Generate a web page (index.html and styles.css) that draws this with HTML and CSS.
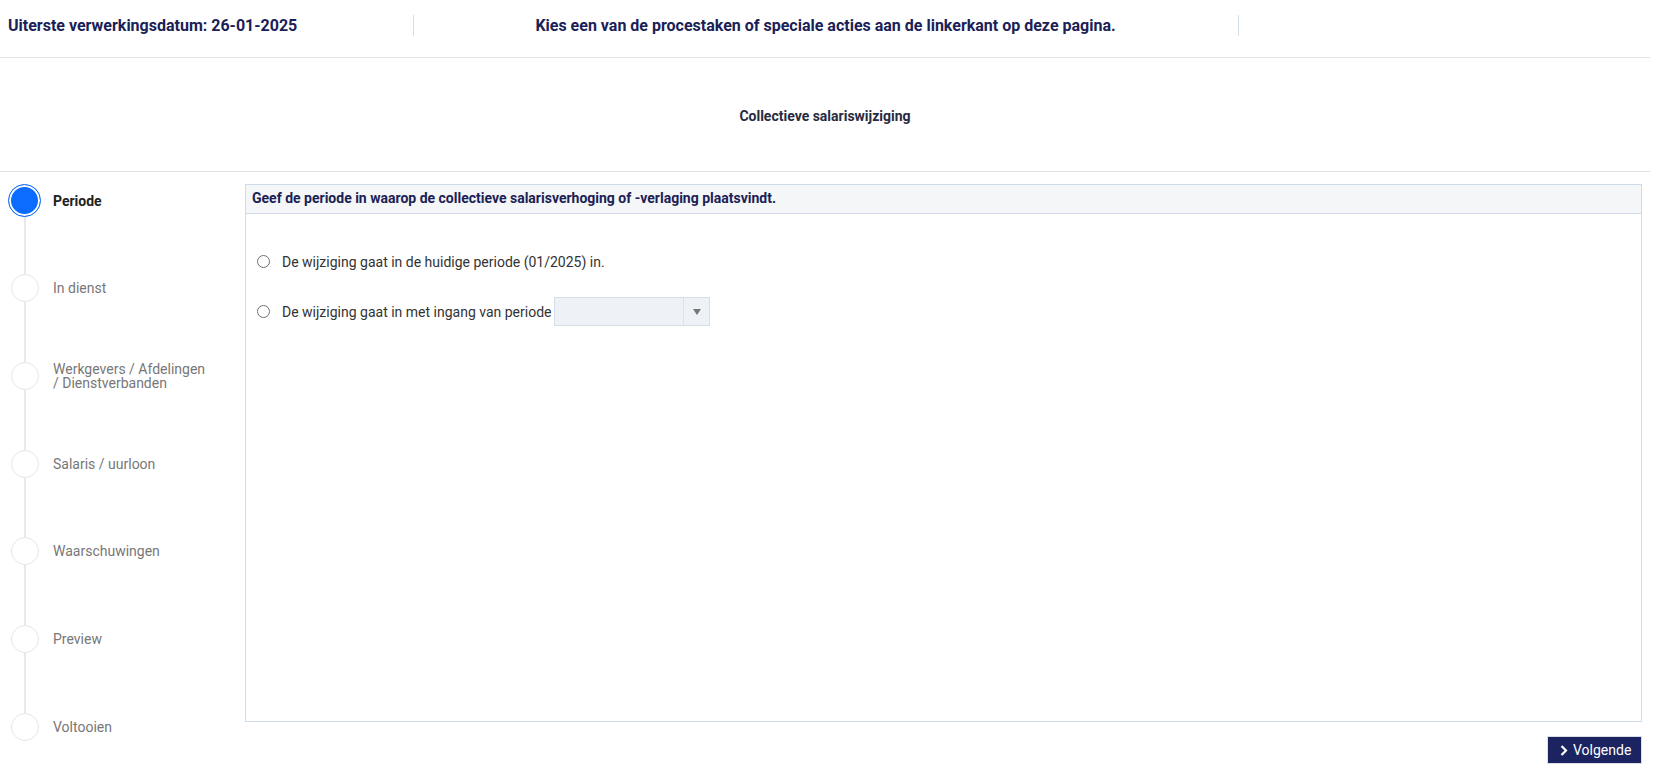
FILE: index.html
```html
<!DOCTYPE html>
<html lang="nl">
<head>
<meta charset="utf-8">
<title>Collectieve salariswijziging</title>
<link rel="stylesheet" href="styles.css">
</head>
<body>
<div class="page">
  <header class="topbar">
    <div class="cell cell-left">Uiterste verwerkingsdatum: 26-01-2025</div>
    <div class="cell cell-mid">Kies een van de procestaken of speciale acties aan de linkerkant op deze pagina.</div>
    <div class="cell cell-right"></div>
  </header>
  <div class="titlebar">
    <h1 class="title">Collectieve salariswijziging</h1>
  </div>
  <div class="main">
    <nav class="steps">
      <div class="step active"><span class="dot-box"><span class="dot"></span></span><span class="label">Periode</span></div>
      <div class="step"><span class="dot-box"><span class="dot"></span></span><span class="label">In dienst</span></div>
      <div class="step"><span class="dot-box"><span class="dot"></span></span><span class="label">Werkgevers / Afdelingen<br>/ Dienstverbanden</span></div>
      <div class="step"><span class="dot-box"><span class="dot"></span></span><span class="label">Salaris / uurloon</span></div>
      <div class="step"><span class="dot-box"><span class="dot"></span></span><span class="label">Waarschuwingen</span></div>
      <div class="step"><span class="dot-box"><span class="dot"></span></span><span class="label">Preview</span></div>
      <div class="step last"><span class="dot-box"><span class="dot"></span></span><span class="label">Voltooien</span></div>
    </nav>
    <section class="content">
      <div class="panel">
        <div class="panel-head">Geef de periode in waarop de collectieve salarisverhoging of -verlaging plaatsvindt.</div>
        <div class="panel-body">
          <label class="option"><span class="radio"></span><span>De wijziging gaat in de huidige periode (01/2025) in.</span></label>
          <label class="option"><span class="radio"></span><span>De wijziging gaat in met ingang van periode</span>
            <span class="select"><span class="select-value"></span><span class="select-arrow"></span></span>
          </label>
        </div>
      </div>
      <div class="actions">
        <button class="btn-next" type="button"><svg class="chev" width="8" height="11" viewBox="0 0 8 11"><path d="M1.5 1 L6 5.5 L1.5 10" fill="none" stroke="#fff" stroke-width="2.2"/></svg>Volgende</button>
      </div>
    </section>
  </div>
</div>
</body>
</html>
```

FILE: styles.css
```css
* { box-sizing: border-box; }
html, body { margin: 0; padding: 0; background: #fff; }
body { font-family: Roboto, "Liberation Sans", Arial, sans-serif; color: #333; }

.page { width: 1650px; }

.topbar {
  display: grid;
  grid-template-columns: 25% 50% 25%;
  height: 58px;
  padding-top: 15px;
  border-bottom: 1px solid #e2e2e2;
}
.cell {
  height: 21px;
  line-height: 21px;
  font-size: 16px;
  font-weight: 700;
  color: #1a2156;
}
.cell-left { padding-left: 8px; }
.cell-mid { text-align: center; border-left: 1px solid #d7e0ea; }
.cell-right { border-left: 1px solid #d7e0ea; }

.titlebar {
  height: 114px;
  border-bottom: 1px solid #e2e2e2;
  display: flex;
  align-items: center;
  justify-content: center;
  padding-top: 3px;
}
.title {
  margin: 0;
  font-size: 14px;
  font-weight: 700;
  color: #272b40;
}

.main {
  display: flex;
  align-items: flex-start;
  padding-top: 12px;
}

.steps {
  width: 245px;
  flex: none;
  background: linear-gradient(#e6e9ee, #e6e9ee) no-repeat 24px 16px / 2px calc(100% - 32px);
}
.step {
  display: flex;
  align-items: center;
  height: 33px;
  margin-bottom: 54.7px;
}
.step.last { margin-bottom: 0; }
.dot-box {
  width: 33px;
  height: 33px;
  margin-left: 8px;
  margin-right: 12px;
  display: flex;
  align-items: center;
  justify-content: center;
  flex: none;
}
.dot {
  width: 28px;
  height: 28px;
  border-radius: 50%;
  background: #fff;
  border: 1px solid #e4e7eb;
}
.step.active .dot {
  width: 33px;
  height: 33px;
  background: #0b6cff;
  border: 1.5px solid #1a72f5;
  box-shadow: inset 0 0 0 2px #fff;
}
.label {
  font-size: 14px;
  line-height: 14px;
  color: #777;
}
.step.active .label { color: #222; font-weight: 700; }

.content {
  flex: 1;
  margin-right: 8px;
}
.panel {
  height: 538px;
  border: 1px solid #cfdbea;
}
.panel-head {
  height: 29px;
  line-height: 27px;
  background: #f5f6f7;
  border-bottom: 1px solid #cfdbea;
  padding-left: 6px;
  font-size: 14px;
  font-weight: 700;
  color: #1a2156;
}
.panel-body {
  padding: 33px 11px 0;
}
.option {
  display: flex;
  align-items: center;
  height: 29px;
  margin-bottom: 21px;
  font-size: 14px;
  color: #333;
}
.radio {
  width: 13px;
  height: 13px;
  border-radius: 50%;
  border: 1px solid #707070;
  background: #fff;
  margin-right: 12px;
  flex: none;
}
.select {
  display: flex;
  width: 156px;
  height: 29px;
  margin-left: 3px;
  border: 1px solid #d6dee8;
  background: #eef2f6;
}
.select-value { flex: 1; }
.select-arrow {
  width: 26px;
  border-left: 1px solid #dbe2ea;
  display: flex;
  align-items: center;
  justify-content: center;
}
.select-arrow::after {
  content: "";
  border-left: 4px solid transparent;
  border-right: 4px solid transparent;
  border-top: 6px solid #777;
}

.actions {
  display: flex;
  justify-content: flex-end;
  margin-top: 14px;
}
.btn-next {
  display: flex;
  align-items: center;
  gap: 5px;
  height: 28px;
  width: 95px;
  padding: 0 0 0 12px;
  background: #1b2361;
  border: 1px solid #dcdfe6;
  color: #fff;
  font-family: Roboto, "Liberation Sans", Arial, sans-serif;
  font-size: 14px;
  cursor: pointer;
}
.chev { flex: none; }
```
